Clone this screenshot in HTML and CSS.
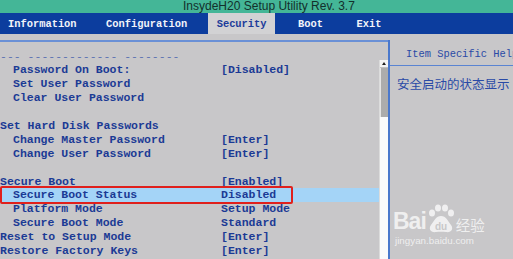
FILE: index.html
```html
<!DOCTYPE html>
<html lang="zh">
<head>
    <meta charset="utf-8">
    <title>InsydeH20 Setup Utility</title>
    <link rel="stylesheet" href="styles.css">
</head>
<body>
    <div class="screen">
        <div class="title-bar">InsydeH20 Setup Utility Rev. 3.7</div>
        <div class="tab-bar">
            <span class="tab">Information</span>
            <span class="tab">Configuration</span>
            <span class="tab tab-active">Security</span>
            <span class="tab tab-boot">Boot</span>
            <span class="tab tab-exit">Exit</span>
        </div>
        <div class="bios-body">
            <div class="menu-panel">
                <div class="menu-list">
                    <div class="menu-row menu-dim"><span>--- ------------- --------</span></div>
                    <div class="menu-row sub"><span>Password On Boot:</span><span>[Disabled]</span></div>
                    <div class="menu-row sub"><span>Set User Password</span></div>
                    <div class="menu-row sub"><span>Clear User Password</span></div>
                    <div class="menu-row"></div>
                    <div class="menu-row"><span>Set Hard Disk Passwords</span></div>
                    <div class="menu-row sub"><span>Change Master Password</span><span>[Enter]</span></div>
                    <div class="menu-row sub"><span>Change User Password</span><span>[Enter]</span></div>
                    <div class="menu-row"></div>
                    <div class="menu-row"><span>Secure Boot</span><span>[Enabled]</span></div>
                    <div class="menu-row sub selected"><span>Secure Boot Status</span><span>Disabled</span></div>
                    <div class="menu-row sub"><span>Platform Mode</span><span>Setup Mode</span></div>
                    <div class="menu-row sub"><span>Secure Boot Mode</span><span>Standard</span></div>
                    <div class="menu-row"><span>Reset to Setup Mode</span><span>[Enter]</span></div>
                    <div class="menu-row"><span>Restore Factory Keys</span><span>[Enter]</span></div>
                </div>
                <div class="scroll-track">
                    <div class="scroll-up"></div>
                    <div class="scroll-thumb"></div>
                </div>
            </div>
            <div class="divider"></div>
            <div class="help-panel">
                <div class="help-head">Item Specific Help</div>
                <div class="help-text">安全启动的状态显示</div>
            </div>
        </div>
        <div class="watermark">
            <div class="wm-logo">
                <span class="wm-bai">Bai</span>
                <svg class="wm-paw" width="28" height="29" viewBox="0 0 28 29">
                    <ellipse cx="5" cy="9" rx="3" ry="3.6"/>
                    <ellipse cx="11" cy="4" rx="3" ry="3.6"/>
                    <ellipse cx="18" cy="4" rx="3" ry="3.6"/>
                    <ellipse cx="24" cy="9" rx="3" ry="3.6"/>
                    <path d="M14 12 C9 12 7 17 4 21 C1 25 4 29 9 28 C12 27.5 16 27.5 19 28 C24 29 27 25 24 21 C21 17 19 12 14 12 Z"/>
                    <text x="14" y="26" class="wm-du">du</text>
                </svg>
                <span class="wm-jy">经验</span>
            </div>
            <div class="wm-url">jingyan.baidu.com</div>
        </div>
    </div>
</body>
</html>
```

FILE: styles.css
```css
body {
    margin: 0;
    background: #c8c7c9;
}
.screen {
    position: relative;
    width: 513px;
    height: 259px;
    overflow: hidden;
    background: #c8c7c9;
}
.title-bar {
    height: 13px;
    line-height: 13px;
    padding-left: 183px;
    background: #44b697;
    color: #13302c;
    font-family: "Liberation Sans", Arial, sans-serif;
    font-size: 12px;
    white-space: nowrap;
}
.tab-bar {
    display: flex;
    height: 21px;
    background: #0c3d9e;
    font-family: "Liberation Mono", monospace;
    font-size: 10.4px;
    font-weight: bold;
    color: #f2f4fa;
}
.tab {
    display: flex;
    align-items: center;
    padding: 0 8.5px;
    margin-right: 12.5px;
}
.tab:first-child {
    margin-left: -0.5px;
}
.tab-active {
    background: #d2d2d4;
    color: #1d3c9a;
}
.tab-boot {
    margin-left: 2px;
}
.tab-exit {
    margin-left: 4px;
}
.bios-body {
    display: grid;
    grid-template-columns: 388px 2px 1fr;
    margin-top: 6px;
    height: 219px;
}
.menu-panel {
    display: grid;
    grid-template-columns: 379px 9px;
    border-top: 2px solid #6a90d6;
}
.menu-list {
    padding-top: 7.5px;
    font-family: "Liberation Mono", monospace;
    font-size: 11.5px;
    font-weight: bold;
    color: #1b3a95;
}
.menu-row {
    display: grid;
    grid-template-columns: 221px 1fr;
    height: 13.9px;
    line-height: 13.9px;
    white-space: nowrap;
}
.menu-row.sub {
    grid-template-columns: 208px 1fr;
    padding-left: 13px;
}
.menu-dim {
    color: #5c72b2;
    font-weight: normal;
}
.selected {
    position: relative;
    background: #a4d4f7;
}
.selected::after {
    content: "";
    position: absolute;
    left: 0;
    top: -2px;
    width: 289px;
    height: 14px;
    border: 2px solid #e0201c;
    border-radius: 2px;
}
.scroll-track {
    margin-top: 18px;
    background: #fbfbfb;
    border-left: 1px solid #dcdcdc;
}
.scroll-up {
    position: relative;
    height: 7px;
    background: #f4f4f4;
    border-bottom: 1px solid #c0c0c0;
}
.scroll-up::after {
    content: "";
    position: absolute;
    left: 2px;
    top: 2px;
    border-left: 2.5px solid transparent;
    border-right: 2.5px solid transparent;
    border-bottom: 3px solid #202020;
}
.scroll-thumb {
    height: 49px;
    background: #acacac;
    border-left: 1px solid #e4e4e4;
}
.divider {
    background: #4a78cc;
}
.help-panel {
    font-family: "Liberation Mono", monospace;
    color: #2a4aa6;
    white-space: nowrap;
    overflow: hidden;
}
.help-head {
    height: 25px;
    line-height: 28px;
    padding-left: 16px;
    font-size: 10.4px;
    border-bottom: 1px solid #5a84d2;
}
.help-text {
    padding: 10px 0 0 7px;
    font-family: "Noto Sans CJK SC", sans-serif;
    font-size: 12.5px;
    line-height: 15px;
}
.watermark {
    position: absolute;
    left: 393px;
    top: 203px;
    color: rgba(255, 255, 255, 0.72);
    font-family: "Liberation Sans", Arial, sans-serif;
}
.wm-logo {
    display: flex;
    align-items: flex-end;
    height: 30px;
}
.wm-bai {
    font-size: 23px;
    line-height: 23px;
    font-weight: bold;
    letter-spacing: -1px;
}
.wm-paw {
    fill: rgba(255, 255, 255, 0.72);
    margin-left: 1px;
}
.wm-du {
    fill: #c8c7c9;
    font-family: "Liberation Sans", Arial, sans-serif;
    font-size: 10px;
    font-weight: bold;
    text-anchor: middle;
}
.wm-jy {
    font-family: "Noto Sans CJK SC", sans-serif;
    font-size: 14.5px;
    line-height: 16px;
    margin-left: 1px;
}
.wm-url {
    margin-top: 2px;
    font-size: 9.8px;
    line-height: 11px;
    padding-left: 2px;
}
```
